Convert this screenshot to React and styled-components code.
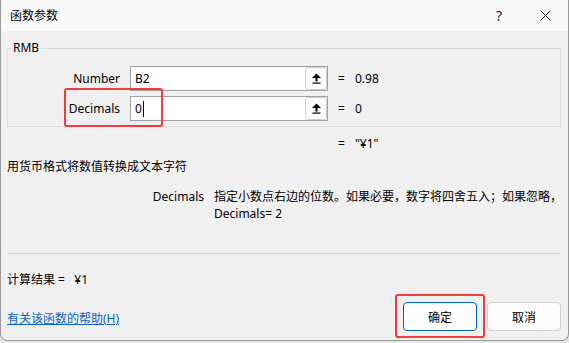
import React from "react";
import styled, { createGlobalStyle } from "styled-components";

const GlobalStyle = createGlobalStyle`
  html, body {
    margin: 0;
    padding: 0;
    background: #e6e6e6;
  }
  body {
    font-family: "Noto Sans", "Noto Sans CJK SC", sans-serif;
    font-size: 12px;
    color: #000;
  }
`;

const Window = styled.div`
  position: relative;
  width: 569px;
  height: 341px;
  box-sizing: border-box;
  background: #f0f0f0;
  border: 1px solid #9a9a9a;
  border-top: none;
  border-radius: 0 0 7px 7px;
  display: flex;
  flex-direction: column;
  overflow: hidden;
`;

const TitleBar = styled.div`
  height: 31px;
  flex: none;
  display: flex;
  align-items: center;
  padding-left: 9px;
  background: #f9f9f9;
`;

const TitleText = styled.span`
  font-size: 12px;
  line-height: 16px;
`;

const TitleButtons = styled.div`
  margin-left: auto;
  display: flex;
  height: 100%;
`;

const TitleButton = styled.div`
  width: 46px;
  height: 100%;
  display: flex;
  align-items: center;
  justify-content: center;
  font-size: 14px;
  color: #1a1a1a;
`;

const Body = styled.div`
  flex: 1;
  display: flex;
  flex-direction: column;
  padding: 0 7px 0 6px;
`;

const GroupBox = styled.fieldset`
  margin: 9px 0 0;
  padding: 10px 0 5px;
  border: 1px solid #dcdcdc;
  min-width: 0;
  display: flex;
  flex-direction: column;
  gap: 5px;
`;

const Legend = styled.legend`
  margin-left: 3px;
  padding: 0 2px;
  font-size: 12px;
  line-height: 16px;
`;

const ParamRow = styled.div`
  display: grid;
  grid-template-columns: 112px 198px 7px auto;
  column-gap: 10px;
  align-items: center;
  height: 25px;
`;

const ParamLabel = styled.span`
  text-align: right;
  line-height: 16px;
`;

const InputBox = styled.div`
  height: 25px;
  box-sizing: border-box;
  border: 1px solid #a2a2a2;
  background: #fff;
  display: flex;
  align-items: center;
  padding-left: 4px;
  line-height: 16px;
`;

const Caret = styled.span`
  display: inline-block;
  width: 1px;
  height: 16px;
  margin-left: 1px;
  background: #000;
`;

const RefButton = styled.div`
  margin-left: auto;
  width: 22px;
  height: 23px;
  box-sizing: border-box;
  border: 1px solid #cdcdcd;
  border-radius: 3px;
  background: #fcfcfc;
  display: flex;
  align-items: center;
  justify-content: center;
`;

const ResultLine = styled.div`
  display: flex;
  gap: 10px;
  margin-top: 9px;
  padding-left: 331px;
  line-height: 16px;
`;

const Description = styled.div`
  margin-top: 7px;
  line-height: 16px;
`;

const HelpRow = styled.div`
  display: grid;
  grid-template-columns: 197px 1fr;
  column-gap: 10px;
  margin-top: 13px;
  line-height: 17px;
`;

const HelpLabel = styled.span`
  text-align: right;
`;

const HelpText = styled.div`
  white-space: nowrap;
`;

const Separator = styled.div`
  height: 1px;
  margin-top: 31px;
  background: #d8d8d8;
`;

const Footer = styled.div`
  display: flex;
  justify-content: space-between;
  align-items: flex-start;
`;

const FooterInfo = styled.div`
  display: flex;
  flex-direction: column;
  gap: 23px;
  padding-top: 18px;
  line-height: 16px;
`;

const HelpLink = styled.a`
  color: #0b63c5;
  text-decoration: underline;
  cursor: pointer;
`;

const ButtonGroup = styled.div`
  display: flex;
  gap: 10px;
  padding-top: 48px;
`;

const DialogButton = styled.button`
  width: 74px;
  height: 29px;
  box-sizing: border-box;
  border: 1px solid ${(p) => (p.$primary ? "#0067c0" : "#d0d0d0")};
  border-radius: 4px;
  background: #fdfdfd;
  font-family: "Noto Sans CJK SC", sans-serif;
  font-size: 12px;
  color: #000;
  padding: 0;
`;

const Highlight = styled.div`
  position: absolute;
  left: ${(p) => p.$x}px;
  top: ${(p) => p.$y}px;
  width: ${(p) => p.$w}px;
  height: ${(p) => p.$h}px;
  box-sizing: border-box;
  border: 2px solid #ef3d3d;
  border-radius: 3px;
  pointer-events: none;
`;

const UpArrow = () => (
  <svg width="9" height="11" viewBox="0 0 9 11">
    <polygon points="0,5 4.5,0.5 9,5" fill="#000" />
    <rect x="3.5" y="4" width="2" height="4.5" fill="#000" />
    <rect x="0.5" y="9.5" width="8" height="1.2" fill="#000" />
  </svg>
);

const CloseIcon = () => (
  <svg width="11" height="11" viewBox="0 0 11 11">
    <path d="M0.5 0.5 L10.5 10.5 M10.5 0.5 L0.5 10.5" stroke="#1a1a1a" strokeWidth="1" />
  </svg>
);

const params = [
  { name: "Number", value: "B2", result: "0.98" },
  { name: "Decimals", value: "0", result: "0", focused: true },
];

export default function App() {
  return (
    <>
      <GlobalStyle />
      <Window>
        <TitleBar>
          <TitleText>函数参数</TitleText>
          <TitleButtons>
            <TitleButton>?</TitleButton>
            <TitleButton>
              <CloseIcon />
            </TitleButton>
          </TitleButtons>
        </TitleBar>
        <Body>
          <GroupBox>
            <Legend>RMB</Legend>
            {params.map((p) => (
              <ParamRow key={p.name}>
                <ParamLabel>{p.name}</ParamLabel>
                <InputBox>
                  {p.value}
                  {p.focused && <Caret />}
                  <RefButton>
                    <UpArrow />
                  </RefButton>
                </InputBox>
                <span>=</span>
                <span>{p.result}</span>
              </ParamRow>
            ))}
          </GroupBox>
          <ResultLine>
            <span>=</span>
            <span>"¥1"</span>
          </ResultLine>
          <Description>用货币格式将数值转换成文本字符</Description>
          <HelpRow>
            <HelpLabel>Decimals</HelpLabel>
            <HelpText>
              指定小数点右边的位数。如果必要，数字将四舍五入；如果忽略，
              <br />
              Decimals= 2
            </HelpText>
          </HelpRow>
          <Separator />
          <Footer>
            <FooterInfo>
              <span>计算结果 =&nbsp;&nbsp; ¥1</span>
              <HelpLink>有关该函数的帮助(H)</HelpLink>
            </FooterInfo>
            <ButtonGroup>
              <DialogButton $primary>确定</DialogButton>
              <DialogButton>取消</DialogButton>
            </ButtonGroup>
          </Footer>
        </Body>
        <Highlight $x={63} $y={88} $w={99} $h={39} />
        <Highlight $x={394} $y={294} $w={90} $h={44} />
      </Window>
    </>
  );
}
